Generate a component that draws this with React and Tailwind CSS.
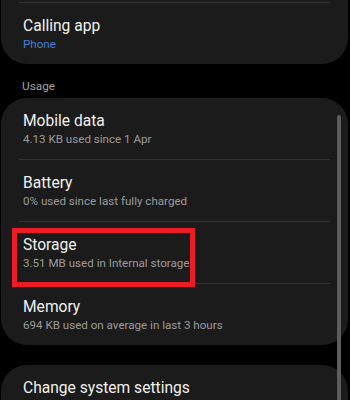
const Row = ({ title, sub, subClass = "text-[#9b9b9b]" }) => (
  <div className="px-[22px] pt-[13px] pb-[12px]">
    <div className="text-[15.6px] leading-[20px] text-[#f1f1f1]">{title}</div>
    {sub && <div className={`text-[11.6px] leading-[16px] ${subClass}`}>{sub}</div>}
  </div>
)

const Divider = () => <div className="mx-[18px] h-px bg-[#323232]" />

const usage = [
  { title: "Mobile data", sub: "4.13 KB used since 1 Apr" },
  { title: "Battery", sub: "0% used since last fully charged" },
  { title: "Storage", sub: "3.51 MB used in Internal storage" },
  { title: "Memory", sub: "694 KB used on average in last 3 hours" },
]

export default function App() {
  return (
    <div className="relative w-[350px] h-[400px] overflow-hidden bg-black font-['Roboto',sans-serif]">
      <div className="flex flex-col pl-[1px] pr-[2px]">
        {/* top card, scrolled partly off screen */}
        <div className="-mt-[22px] rounded-b-[26px] bg-[#1b1b1b] pt-[24px]">
          <Divider />
          <Row title="Calling app" sub="Phone" subClass="text-[#4480d6]" />
        </div>

        <div className="px-[21px] pt-[14px] pb-[4px] text-[11.8px] leading-[16px] text-[#a3a3a3]">Usage</div>

        <div className="rounded-[26px] bg-[#1b1b1b]">
          {usage.map((u, i) => (
            <div key={u.title}>
              {i > 0 && <Divider />}
              <Row title={u.title} sub={u.sub} />
            </div>
          ))}
        </div>

        <div className="mt-[20px] rounded-t-[26px] bg-[#1b1b1b] h-[60px]">
          <Row title="Change system settings" />
        </div>
      </div>

      {/* scrollbar */}
      <div className="absolute left-[337px] top-[115px] w-[4px] h-[300px] rounded-full bg-[#5d5d5d]" />

      {/* highlight box */}
      <div className="absolute left-[12px] top-[228px] w-[183px] h-[59px] border-[5px] border-[#ec1c24]" />
    </div>
  )
}
